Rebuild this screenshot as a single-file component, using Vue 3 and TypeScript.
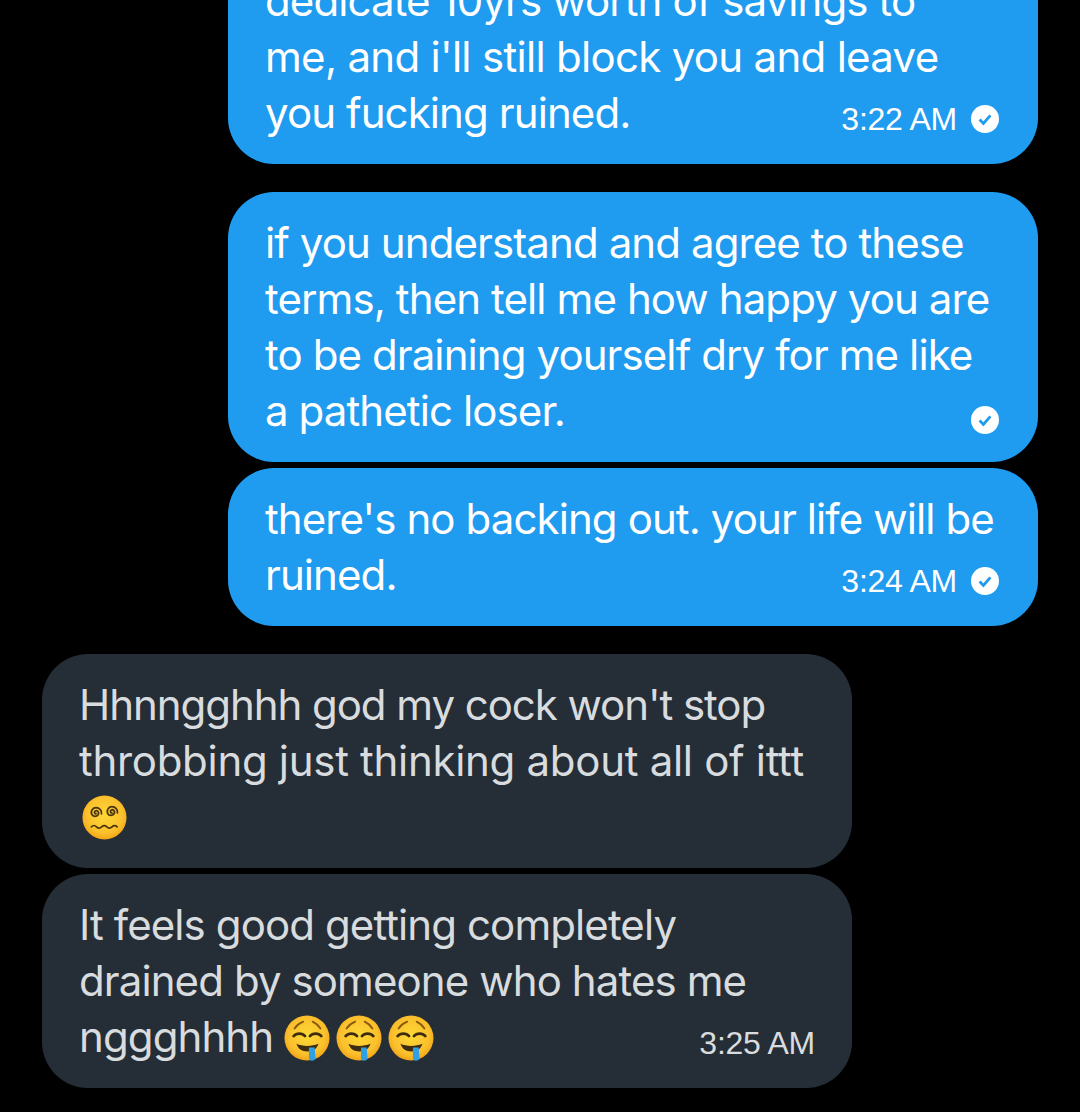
<template>
  <div class="chat">
    <div class="group sent">
      <div class="bubble">
        <div class="line">dedicate 10yrs worth of savings to</div>
        <div class="line looser">me, and i'll still block you and leave</div>
        <div class="line">you fucking ruined.</div>
        <div class="meta"><span class="time">3:22 AM</span><svg class="tick" viewBox="0 0 28 28"><circle cx="14" cy="14" r="14" fill="#fff"/><path d="M8.6 14.6l3.8 3.8 7-8" fill="none" stroke="#1f9bf0" stroke-width="2.8"/></svg></div>
      </div>
    </div>
    <div class="group sent">
      <div class="bubble">
        <div class="line">if you understand and agree to these</div>
        <div class="line">terms, then tell me how happy you are</div>
        <div class="line">to be draining yourself dry for me like</div>
        <div class="line">a pathetic loser.</div>
        <div class="meta low"><svg class="tick" viewBox="0 0 28 28"><circle cx="14" cy="14" r="14" fill="#fff"/><path d="M8.6 14.6l3.8 3.8 7-8" fill="none" stroke="#1f9bf0" stroke-width="2.8"/></svg></div>
      </div>
      <div class="bubble">
        <div class="line">there's no backing out. your life will be</div>
        <div class="line">ruined.</div>
        <div class="meta"><span class="time">3:24 AM</span><svg class="tick" viewBox="0 0 28 28"><circle cx="14" cy="14" r="14" fill="#fff"/><path d="M8.6 14.6l3.8 3.8 7-8" fill="none" stroke="#1f9bf0" stroke-width="2.8"/></svg></div>
      </div>
    </div>
    <div class="group received">
      <div class="bubble">
        <div class="line tighter">Hhnngghhh god my cock won't stop</div>
        <div class="line loosest">throbbing just thinking about all of ittt</div>
        <div class="line emoji-line">
          <svg class="emoji" viewBox="0 0 48 48">
            <defs>
              <radialGradient id="face" cx="50%" cy="45%" r="55%">
                <stop offset="0" stop-color="#fdd835"/>
                <stop offset="0.75" stop-color="#fbc02d"/>
                <stop offset="1" stop-color="#f2a516"/>
              </radialGradient>
            </defs>
            <circle cx="24" cy="24" r="23.5" fill="url(#face)"/>
            <path d="M15 20c-1.500.3-2.500-2-.8-3 2.200-1 4.300 1.300 3.300 3.700-1.300 2.800-5.800 2.800-7.200-.2-1.400-3.500 1.300-7 4.700-7 3.700 0 6.300 3 5.800 6.500" fill="none" stroke="#4a3510" stroke-width="1.900" stroke-linecap="round"/>
            <path d="M32 19c-1.500.3-2.500-2-.8-3 2.200-1 4.300 1.300 3.300 3.700-1.300 2.800-5.800 2.800-7.200-.2-1.400-3.500 1.300-7 4.700-7 3.700 0 6.300 3 5.800 6.500" fill="none" stroke="#4a3510" stroke-width="1.900" stroke-linecap="round"/>
            <path d="M10 34c2-2 3.500-2 5.500 0s3.500 1.800 5.500 0 3.500-1.800 5.500 0 3.500 1.800 5.500 0 3.500-1.800 5.500 0" fill="none" stroke="#4a3510" stroke-width="1.800" stroke-linecap="round"/>
          </svg>
        </div>
      </div>
      <div class="bubble">
        <div class="line">It feels good getting completely</div>
        <div class="line">drained by someone who hates me</div>
        <div class="line">nggghhhh
          <span class="emojis">
            <svg v-for="n in 3" :key="n" class="emoji small" viewBox="0 0 48 48">
              <circle cx="24" cy="24" r="23.5" fill="url(#face)"/>
              <path d="M11 14c2-3 5.500-5.500 9-7M38 14c-2-3-5-5.500-8-7" fill="none" stroke="#8a5a10" stroke-width="2" stroke-linecap="round"/>
              <path d="M10 22c3-3.500 9-3.500 12 0M27 22c3-3.500 9-3.500 12 0" fill="none" stroke="#3d2c10" stroke-width="2.800" stroke-linecap="round"/>
              <path d="M13 30c6 3 16 3 23 0-2 6-6 8-11.500 8S15 36 13 30z" fill="#3d2c10"/>
              <path d="M26 34h6l.8 10a3.400 3.400 0 0 1-6.800.4z" fill="#2f9fe6"/>
            </svg>
          </span>
        </div>
        <div class="meta wide"><span class="time">3:25 AM</span></div>
      </div>
    </div>
  </div>
</template>

<script setup lang="ts">
</script>

<style>
html, body {
  background: #000;
}
</style>

<style scoped>
.chat {
  height: 1112px;
  overflow: hidden;
  background: #000;
  display: flex;
  flex-direction: column;
  gap: 28px;
  padding: 0 42px;
  font-family: Inter, "Liberation Sans", sans-serif;
}

.group {
  display: flex;
  flex-direction: column;
  gap: 6px;
}

.group:first-child {
  margin-top: -50px;
}

.sent {
  align-items: flex-end;
}

.received {
  align-items: flex-start;
}

.bubble {
  position: relative;
  width: 810px;
  box-sizing: border-box;
  padding: 23px 37px;
  border-radius: 46px;
  background: #1f9bf0;
  color: #fff;
}

.received .bubble {
  background: #252e37;
  color: #d9dcde;
}

.line {
  height: 56px;
  line-height: 56px;
  font-size: 42px;
  letter-spacing: -0.9px;
  white-space: nowrap;
}

/* Inter runs a little different from the original font on these lines */
.looser {
  letter-spacing: -0.7px;
}

.loosest {
  letter-spacing: -0.3px;
}

.tighter {
  letter-spacing: -1.05px;
}

.emoji-line {
  display: flex;
  align-items: center;
  padding-left: 3px;
}

.meta {
  position: absolute;
  right: 39px;
  bottom: 23px;
  display: flex;
  align-items: center;
  gap: 14px;
  height: 44px;
  font-family: "Liberation Sans", Arial, sans-serif;
  font-size: 32px;
  letter-spacing: -0.25px;
}

.meta.low {
  bottom: 20px;
}

.meta.wide {
  right: 37px;
}

.tick {
  width: 28px;
  height: 28px;
}

.emoji {
  width: 45px;
  height: 45px;
  display: block;
}

.emoji.small {
  width: 46px;
  height: 46px;
}

.emojis {
  display: inline-flex;
  gap: 6px;
  vertical-align: -9px;
}
</style>
